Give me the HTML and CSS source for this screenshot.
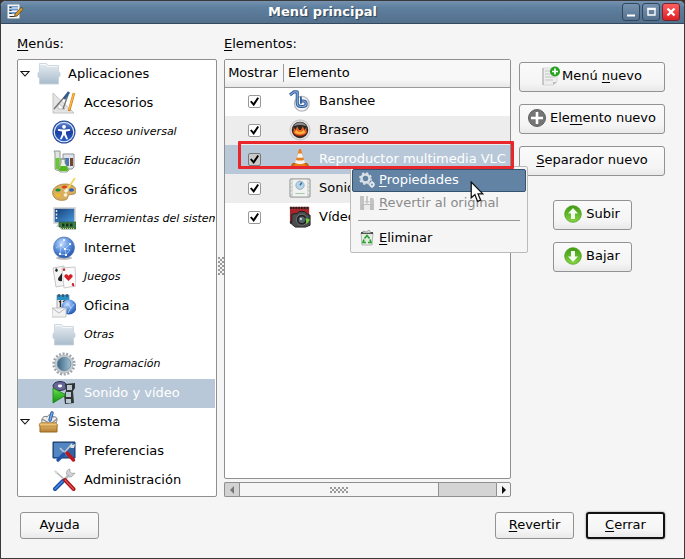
FILE: index.html
```html
<!DOCTYPE html>
<html lang="es">
<head>
<meta charset="utf-8">
<title>Menú principal</title>
<link rel="stylesheet" href="styles.css">
</head>
<body>
<svg class="defs" aria-hidden="true">
  <defs>
    <linearGradient id="folder" x1="0" y1="0" x2="0" y2="1"><stop offset="0" stop-color="#e6ecf1"/><stop offset="1" stop-color="#a9bccb"/></linearGradient>
    <radialGradient id="blue" cx=".4" cy=".3" r=".75"><stop offset="0" stop-color="#c3dcff"/><stop offset=".5" stop-color="#5d92df"/><stop offset="1" stop-color="#1d4da8"/></radialGradient>
    <linearGradient id="deep" x1="0" y1="0" x2="0" y2="1"><stop offset="0" stop-color="#5f86d6"/><stop offset=".5" stop-color="#1b3f9e"/><stop offset="1" stop-color="#2c62cc"/></linearGradient>
    <linearGradient id="screen" x1="0" y1="0" x2="1" y2="1"><stop offset="0" stop-color="#123c73"/><stop offset="1" stop-color="#4d9be0"/></linearGradient>
    <linearGradient id="wood" x1="0" y1="0" x2="0" y2="1"><stop offset="0" stop-color="#e6bd74"/><stop offset="1" stop-color="#b57e32"/></linearGradient>
    <linearGradient id="green" x1="0" y1="0" x2="0" y2="1"><stop offset="0" stop-color="#3f9a14"/><stop offset="1" stop-color="#86d63e"/></linearGradient>
    <linearGradient id="steel" x1="0" y1="0" x2="1" y2="0"><stop offset="0" stop-color="#3a6483"/><stop offset="1" stop-color="#9fc0d3"/></linearGradient>
    <linearGradient id="play" x1="0" y1="0" x2="0" y2="1"><stop offset="0" stop-color="#6be04e"/><stop offset="1" stop-color="#10930f"/></linearGradient>
    <symbol id="i-folder" viewBox="0 0 24 24"><path d="M2.500 1.500h7l1.500 2h10.500v6l1.500 1v3.500l-1.500 1V22h-19v-6L1 15v-4.500l1.500-1z" fill="url(#folder)" stroke="#c4d0da" stroke-width=".8"/><path d="M3.500 2.500h5.500l1.500 2h10" stroke="#fff" fill="none" opacity=".7"/></symbol>
    <symbol id="i-tools" viewBox="0 0 24 24"><path d="M3 3l12 11" stroke="#b4b6b7" stroke-width="1.600"/><path d="M2 2l4 2.500-2 2z" fill="#d9dada"/><path d="M18 1a4 4 0 0 0-3 6l2 2 3-.5 3-3.500-3 .5-2-2z" fill="#d0d3d5" stroke="#8b8d8f" stroke-width=".6"/><path d="M17 7l-6 6" stroke="#b8bcbf" stroke-width="2.600"/><path d="M11 13l-8 8" stroke="#174ba5" stroke-width="4" stroke-linecap="round"/><path d="M11 13l-8 8" stroke="#4b8be4" stroke-width="1.400" stroke-linecap="round"/><path d="M13 12l8.500 9" stroke="#a70f12" stroke-width="4" stroke-linecap="round"/><path d="M13 12l8.500 9" stroke="#e65355" stroke-width="1.200" stroke-linecap="round"/></symbol>
  </defs>
</svg>

<div class="window">
  <header class="titlebar">
    <svg class="app-icon" viewBox="0 0 16 16"><rect x="1" y="1" width="11" height="13" fill="#f4f6f8" stroke="#f6f4e8"/><path d="M2 2h9v1.500H2zM2 4.500h9v2H2zM2 8h9v2H2z" fill="#6f99d2"/><path d="M2.500 3.500h2m-2 3h2m-2 3h2m-2 3h5" stroke="#333"/><path d="M14.500 3L8 10l-.5 2.500L10 12l6-6.500z" fill="#d9982d" stroke="#5b4215" stroke-width=".8"/></svg>
    <h1 class="title">Menú principal</h1>
    <div class="window-buttons">
      <button class="wb" aria-label="Minimizar"><svg viewBox="0 0 16 16"><path d="M4 11.500h8" stroke="#fff" stroke-width="2"/></svg></button>
      <button class="wb" aria-label="Maximizar"><svg viewBox="0 0 16 16"><path d="M5 5h7v6H5z" fill="none" stroke="#fff" stroke-width="1.400"/><path d="M4.300 4.700h8.400" stroke="#fff" stroke-width="2"/></svg></button>
      <button class="wb close" aria-label="Cerrar ventana"><svg viewBox="0 0 16 16"><path d="M4.500 4.500l7 7m0-7l-7 7" stroke="#fff" stroke-width="2.400"/></svg></button>
    </div>
  </header>

  <main class="content">
    <section class="menus">
      <h2 class="label"><u>M</u>enús:</h2>
      <ul class="tree">
        <li class="row top"><svg class="expander" viewBox="0 0 10 8"><path d="M1 1.500h8L5 6z" fill="#fff" stroke="#111" stroke-width="1.100"/></svg><svg class="icon"><use href="#i-folder"/></svg><span>Aplicaciones</span></li>
        <li class="row"><svg class="icon" viewBox="0 0 24 24"><path d="M1 2v20h21z" fill="#e4e4e4" stroke="#c4c4c4"/><path d="M6 12v6h7z" fill="#fff" stroke="#bbb"/><path d="M15 3L2 18M16 4l-5 14" stroke="#777" stroke-width="1.400"/><path d="M17 1l-5 7" stroke="#315a8d" stroke-width="2.600"/><path d="M22 2l-5 18" stroke="#c67a18" stroke-width="2.600"/><path d="M22 2l-5 17" stroke="#fdb53b" stroke-width="1.500"/></svg><span>Accesorios</span></li>
        <li class="row hidden-menu"><svg class="icon" viewBox="0 0 24 24"><circle cx="12" cy="12" r="11.500" fill="#2a4f9f"/><circle cx="12" cy="12" r="10.300" fill="#e9f0fc"/><circle cx="12" cy="12" r="9.200" fill="url(#deep)"/><circle cx="12" cy="6.800" r="1.900" fill="#fff"/><path d="M6 9l5 .6h2L18 9v1.800l-4 .8v2.400l2 5-1.600.6L12 15l-2.400 4.600L8 19l2-5v-2.400l-4-.8z" fill="#fff"/></svg><span>Acceso universal</span></li>
        <li class="row hidden-menu"><svg class="icon" viewBox="0 0 24 24"><path d="M2 2h6v18a3 3 0 0 1-5 0V4z" fill="#dfe6df" stroke="#8e9a8e"/><path d="M3.500 9h4v11h-4z" fill="#6cc634"/><path d="M11 5h11v13l-2 2h-7l-2-3z" fill="#dfe3ea" stroke="#8d9098"/><path d="M12 9h5v8h-5z" fill="#4c77b5"/><path d="M18 9h3v8h-3z" fill="#7a432b"/><path d="M9 10h4v4l4 7-2 2H8l-2-2 3-7z" fill="#e9f2e5" stroke="#7d917a" stroke-width=".8"/><path d="M8.500 17h6l2 4-1.500 1H8l-1.500-1z" fill="#54b81c"/><path d="M8 10h6" stroke="#89938a"/></svg><span>Educación</span></li>
        <li class="row"><svg class="icon" viewBox="0 0 24 24"><path d="M1 17C-1 11 5 6 13 6c7 0 12 3 11 8-.5 3-5 2-7 3s0 4-4 5C8 23 3 22 1 17z" fill="#d9ae61" stroke="#a97c34" stroke-width=".8"/><ellipse cx="6" cy="12" rx="2.700" ry="1.600" fill="#17913b"/><ellipse cx="12.500" cy="9" rx="2.700" ry="1.600" fill="#d94418"/><ellipse cx="19.500" cy="12" rx="2.500" ry="1.700" fill="#2862b6"/><ellipse cx="6" cy="17" rx="2.700" ry="1.600" fill="#f0be1f"/><circle cx="13.500" cy="17" r="1.800" fill="#fff4d5"/><path d="M23 0l-9 13" stroke="#f3d35c" stroke-width="1.800"/><path d="M15.500 11L13 14" stroke="#f4f1e3" stroke-width="3"/></svg><span>Gráficos</span></li>
        <li class="row hidden-menu"><svg class="icon" viewBox="0 0 24 24"><rect x="2" y="1" width="21" height="15" fill="url(#screen)" stroke="#d0d3d3" stroke-width="1.600"/><path d="M4.500 3v9" stroke="#d7e8ff" stroke-width="1.500" stroke-dasharray="2 1.500"/><path d="M6 17h6l-1 3H4z" fill="#cfcfcf"/><path d="M7 15h17v7H9v-2H7z" fill="#3e7e46" stroke="#23552c" stroke-width=".6"/><path d="M10 16.500h2.500v3H10zm4 0h2.500v3H14zm4 0h2.500v3H18z" fill="#18301c"/><path d="M9 21.500h13" stroke="#d8c46a" stroke-dasharray="1 1"/></svg><span>Herramientas del sistema</span></li>
        <li class="row"><svg class="icon" viewBox="0 0 24 24"><ellipse cx="12" cy="22" rx="8" ry="1.700" fill="#bbb"/><circle cx="12" cy="11.500" r="10.500" fill="url(#blue)" stroke="#5173ad" stroke-width=".8"/><path d="M4 12l5-3 4 4 5-5M9 9l3-5m1 9l1 6m-5-10l-1 9 6 1 4-5-5-1" fill="none" stroke="#c9dfff" stroke-width=".6"/><path d="M8 8h2v2H8zM12 12h2v2h-2zM17 7h2v2h-2zM13 18h2v2h-2zM7 17h2v2H7zM11 3h2v2h-2z" fill="#eef6ff"/></svg><span>Internet</span></li>
        <li class="row hidden-menu"><svg class="icon" viewBox="0 0 24 24"><path d="M1 3l11-2 3 19-11 2z" fill="#f4f4f4" stroke="#c5c5c5"/><path d="M4 3l2 2-1 2-2-1zM10 8v8c-4 1-5-2-3-4z" fill="#252525"/><path d="M10 3l13-1 1 19-12 2z" fill="#fbfbfb" stroke="#cacaca"/><path d="M16.500 16l-4-4c-1-3 3-4 4-1 1-3 5-2 4 1z" fill="#d51f28"/><path d="M12 6l-1-2h2zM21 18l1 3-2-1z" fill="#d51f28" stroke="#d51f28"/></svg><span>Juegos</span></li>
        <li class="row"><svg class="icon" viewBox="0 0 24 24"><path d="M5 1h12v13H5z" fill="#eee" stroke="#aaa"/><path d="M5 1h12v5H5z" fill="#298fc5"/><path d="M7 0v3m4-3v3m4-3v3" stroke="#33434f" stroke-width="1.300"/><path d="M7 8l1.500-1v6M11 8c1-2 4-1 3 1l-3 4h4" stroke="#252525" stroke-width="1.400" fill="none"/><circle cx="17" cy="13" r="7.500" fill="url(#blue)"/><path d="M12 12l4-2 3 4 3-4m-3 4l-3 5" stroke="#d5e7ff" stroke-width=".7" fill="none"/><path d="M0 14h14v9H0z" fill="#f2f2f2" stroke="#c6c6c6"/><path d="M0 14l7 5 7-5" fill="none" stroke="#bbb"/></svg><span>Oficina</span></li>
        <li class="row hidden-menu"><svg class="icon"><use href="#i-folder"/></svg><span>Otras</span></li>
        <li class="row hidden-menu"><svg class="icon" viewBox="0 0 24 24"><circle cx="12" cy="12" r="10.300" fill="none" stroke="#9ba5ab" stroke-width="2.600" stroke-dasharray="2 1.600"/><circle cx="12" cy="12" r="9" fill="#c7ced2" stroke="#a2adb3" stroke-width=".7"/><circle cx="12" cy="12" r="6.800" fill="url(#steel)" stroke="#6f8796" stroke-width=".8"/></svg><span>Programación</span></li>
        <li class="row selected"><svg class="icon" viewBox="0 0 24 24"><ellipse cx="8" cy="5" rx="7" ry="4.500" fill="#656597" stroke="#303055"/><ellipse cx="8" cy="5" rx="2.200" ry="1.400" fill="#fff"/><path d="M13 3l10-1v5l-2 3 1 12-9 1-1-9 2-4z" fill="#303536"/><path d="M15 4h5v5h-5zm-1 7h5v5h-5zm0 7h5v4h-5z" fill="#b8c7cf"/><path d="M1 7l13 7L1 22z" fill="url(#play)" stroke="#128313" stroke-width=".8"/></svg><span>Sonido y vídeo</span></li>
        <li class="row top"><svg class="expander" viewBox="0 0 10 8"><path d="M1 1.500h8L5 6z" fill="#fff" stroke="#111" stroke-width="1.100"/></svg><svg class="icon" viewBox="0 0 24 24"><path d="M5 13c-1-5 2-8 5-6 1-3 6-3 6 0 4-1 5 2 3 6z" fill="#eceeec" stroke="#777"/><path d="M13 10l2-7" stroke="#275a9f" stroke-width="3.400" stroke-linecap="round"/><path d="M13 10l2-7" stroke="#7bacec" stroke-width="1.500" stroke-linecap="round"/><path d="M5 9l7 4m3 0l5-4" stroke="#888" stroke-width="1.200"/><path d="M3 14h17v8H3z" fill="url(#wood)" stroke="#9b691f"/><path d="M3 13h16l2 3H2z" fill="#ebc37b" stroke="#b78031" stroke-width=".8"/></svg><span>Sistema</span></li>
        <li class="row"><svg class="icon" viewBox="0 0 24 24"><path d="M1 3h22v16H1z" fill="#3264a5" stroke="#143865"/><path d="M2 4h20L7 18H2z" fill="#5286c3"/><path d="M8 9l7 7M19 6l-7 8" stroke="#c1cad1" stroke-width="1.600"/><path d="M12 15l-6 6" stroke="#1f53ab" stroke-width="3.400" stroke-linecap="round"/><path d="M15 14l6.500 7" stroke="#bd191d" stroke-width="3.400" stroke-linecap="round"/><path d="M18 8l1-4 1.500 2L23 5l-1 4h-3z" fill="#dfe4e7"/></svg><span>Preferencias</span></li>
        <li class="row"><svg class="icon"><use href="#i-tools"/></svg><span>Administración</span></li>
      </ul>
    </section>

    <div class="splitter"><span class="grip grip-v"></span></div>

    <section class="elements">
      <h2 class="label"><u>E</u>lementos:</h2>
      <div class="panel">
        <div class="table-box">
          <table>
            <thead><tr><th class="show-col"><span>Mostrar</span></th><th>Elemento</th></tr></thead>
            <tbody>
              <tr><td class="show-col"><input type="checkbox" id="c1" checked></td><td><label for="c1"><svg class="icon" viewBox="0 0 24 24"><circle cx="14" cy="15" r="8" fill="#f4f5f6" stroke="#b9bdc2" stroke-width="1.500"/><path d="M1 5.500L5.500 2H9v12.500c0 2 1.500 3.500 4 3.500h2c5 0 5-6 0-6h-2" fill="none" stroke="#315c94" stroke-width="3.400" stroke-linejoin="round"/><path d="M1 5.500L5.500 2H9v12.500c0 2 1.500 3.500 4 3.500h2c5 0 5-6 0-6h-2" fill="none" stroke="#82ace0" stroke-width="1.300"/><path d="M13 7v8" stroke="#315c94" stroke-width="2"/></svg>Banshee</label></td></tr>
              <tr><td class="show-col"><input type="checkbox" id="c2" checked></td><td><label for="c2"><svg class="icon" viewBox="0 0 24 24"><circle cx="12" cy="12" r="11" fill="#e2e2e2" stroke="#c2c2c2"/><circle cx="12" cy="12" r="9" fill="#2c2726"/><path d="M3.500 13h17a9 9 0 0 1-17 0z" fill="#8a2015"/><path d="M5 15V9l2 3 2-4 2 4h2l2-4 2 4 2-3v6c-3 4-11 4-14 0z" fill="#e8621d"/><path d="M6 15l2-3 2 2h4l2-2 2 3c-3 2-9 2-12 0z" fill="#ffb240"/><path d="M5 8c3-6 11-6 14 0-5-2-9-2-14 0z" fill="#8a8988"/></svg>Brasero</label></td></tr>
              <tr class="selected"><td class="show-col"><input type="checkbox" id="c3" checked></td><td><label for="c3"><svg class="icon" viewBox="0 0 24 24"><path d="M4 17h16l2 4-3 1H5l-3-1z" fill="#d76f0d" stroke="#ad5607"/><path d="M11 1h2l5 18c-3 2-9 2-12 0z" fill="#e78120"/><path d="M10 6h4l1.500 4c-2 1-5 1-7 0zM7.500 13c3 1 6 1 9 0l1 3c-3 2-8 2-11 0z" fill="#f3f3f0"/></svg>Reproductor multimedia VLC</label></td></tr>
              <tr><td class="show-col"><input type="checkbox" id="c4" checked></td><td><label for="c4"><svg class="icon" viewBox="0 0 24 24"><rect x="1" y="2" width="22" height="20" rx="1" fill="#c9ceca" stroke="#999"/><rect x="4" y="3" width="16" height="18" fill="#f1f3f0"/><circle cx="12" cy="9" r="4.500" fill="#b9d4e9" stroke="#94a9b9"/><path d="M12 9l2-3" stroke="#246dac" stroke-width="1.500"/><path d="M7 18h10" stroke="#9bc5a1"/><path d="M2.500 4v16m19-16v16" stroke="#f5f5f5" stroke-dasharray="2 2"/></svg>Sonido</label></td></tr>
              <tr><td class="show-col"><input type="checkbox" id="c5" checked></td><td><label for="c5"><svg class="icon" viewBox="0 0 24 24"><rect x="1" y="1" width="21" height="17" fill="#a92529"/><path d="M1 2h21M1 18h20" stroke="#222" stroke-width="2.500" stroke-dasharray="2 1"/><path d="M3 9l6-1 2-2h6l3 3 3 1v11l-5 2H7l-4-3z" fill="#4a4c4d" stroke="#1d1e1f"/><circle cx="14" cy="15" r="6" fill="#202325" stroke="#777"/><circle cx="14" cy="15" r="3.500" fill="#57646d"/><circle cx="13" cy="14" r="1.300" fill="#c9d3da"/><path d="M18 13l5 2-4 5z" fill="#70cf38"/></svg>Vídeos</label></td></tr>
            </tbody>
          </table>
        </div>
        <div class="scrollbar">
          <button class="arrow off" aria-label="Izquierda"><svg viewBox="0 0 6 8"><path d="M5 0v8L1 4z" fill="#777"/></svg></button>
          <div class="track"><div class="thumb"><span class="grip grip-h"></span></div></div>
          <button class="arrow" aria-label="Derecha"><svg viewBox="0 0 6 8"><path d="M1 0v8l4-4z" fill="#111"/></svg></button>
        </div>
        <div class="context-menu" role="menu">
          <button class="item active" role="menuitem"><svg viewBox="0 0 16 16"><circle cx="6.500" cy="6.500" r="4" fill="none" stroke="#d8e0e6" stroke-width="2.500"/><circle cx="6.500" cy="6.500" r="5.600" fill="none" stroke="#d8e0e6" stroke-width="1.600" stroke-dasharray="2.200 2.200"/><circle cx="13" cy="12.500" r="1.800" fill="none" stroke="#e6ecf0" stroke-width="1.800"/><path d="M13 9v1m0 5v1m-3.500-3.500h1m5 0h1" stroke="#e6ecf0" stroke-width="1.200"/></svg><span><u>P</u>ropiedades</span></button>
          <button class="item" role="menuitem" disabled><svg viewBox="0 0 16 16"><path d="M1 1h4v14H1zM11 3h3l1 2v10h-4z" fill="#c3c3c3"/><path d="M2 9h12v6H2z" fill="#bdbdbd"/><path d="M5 10h6v5H5z" fill="#ececec"/><path d="M7 1h2v5h2l-3 3-3-3h2z" fill="#c9c9c9"/></svg><span><u>R</u>evertir al original</span></button>
          <hr>
          <button class="item" role="menuitem"><svg viewBox="0 0 16 16"><path d="M2 3h12l-1 12H3z" fill="#e5eae5" stroke="#a2aaa2" stroke-width=".8"/><path d="M2 2h12v2H2z" fill="#4d514d"/><path d="M4 1l3 1 3-2 2 3H4z" fill="#d8ddd8" stroke="#666" stroke-width=".5"/><path d="M5.500 8.500L8 5.500l2.500 3M11 9.500l1 3H9M7 12.500H4l1-3" fill="none" stroke="#27a52d" stroke-width="1.700"/></svg><span><u>E</u>liminar</span></button>
        </div>
        <div class="highlight"></div>
        <svg class="cursor" viewBox="0 0 13 21"><path d="M1 1v15l3.500-3 2.500 6.500 3-1.200-2.500-6H12z" fill="#fff" stroke="#111" stroke-width="1.200"/></svg>
      </div>
    </section>

    <aside class="actions">
      <button class="btn wide"><svg class="new-page" viewBox="0 0 18 20"><path d="M1 2h14v14l-4 3H1z" fill="#eee" stroke="#d2d2d2" stroke-width=".8"/><path d="M3 5h6M3 8h8M3 11h10M3 14h8" stroke="#c5c5c5"/><path d="M1 2v17" stroke="#aaa"/><path d="M11 19v-3h4z" fill="#bbb"/><circle cx="13" cy="5.500" r="5" fill="#25a31e"/><path d="M13 2.500v6m-3-3h6" stroke="#fff" stroke-width="1.700"/></svg><span>Menú <u>n</u>uevo</span></button>
      <button class="btn wide"><svg viewBox="0 0 18 18"><circle cx="9" cy="9" r="8.500" fill="#757575" stroke="#606060"/><path d="M9 3v12M3 9h12" stroke="#fff" stroke-width="2.600"/></svg><span>Ele<u>m</u>ento nuevo</span></button>
      <button class="btn wide"><span><u>S</u>eparador nuevo</span></button>
      <div class="move">
        <button class="btn"><svg viewBox="0 0 18 18"><circle cx="9" cy="9" r="8.300" fill="url(#green)" stroke="#4c9d20" stroke-width=".8"/><path d="M9 3l5 5.500h-3V14H7V8.500H4z" fill="#f4fbf0"/></svg><span>Subir</span></button>
        <button class="btn"><svg viewBox="0 0 18 18"><circle cx="9" cy="9" r="8.300" fill="url(#green)" stroke="#4c9d20" stroke-width=".8"/><path d="M9 15l5-5.500h-3V4H7v5.500H4z" fill="#f4fbf0"/></svg><span>Bajar</span></button>
      </div>
    </aside>
  </main>

  <footer class="footer">
    <button class="btn"><span>Ay<u>u</u>da</span></button>
    <div class="spacer"></div>
    <button class="btn"><span><u>R</u>evertir</span></button>
    <button class="btn default"><span><u>C</u>errar</span></button>
  </footer>
</div>
</body>
</html>
```
FILE: styles.css
```css
* { box-sizing: border-box; }
body {
  margin: 0;
  background: #333;
  color: #000;
  font: 13px/20px "DejaVu Sans", sans-serif;
}
button { font: inherit; color: inherit; padding: 0; margin: 0; }
u { text-underline-offset: 2px; text-decoration-thickness: 1px; }
h1, h2 { margin: 0; }
.defs { position: absolute; width: 0; height: 0; }

.window {
  min-height: 100vh;
  display: flex;
  flex-direction: column;
  background: #f5f5f5;
  border: 1px solid #3a3a3a;
  border-radius: 6px 6px 0 0;
  overflow: hidden;
}
.titlebar {
  display: flex;
  align-items: center;
  height: 23px;
  padding: 0 4px 0 6px;
  background: linear-gradient(#7592af, #5f7f9f 30%, #53708c);
  border-bottom: 1px solid #34495d;
}
.app-icon { width: 16px; height: 16px; }
.title {
  flex: 1;
  text-align: center;
  color: #fff;
  font-size: 13px;
  font-weight: bold;
  text-shadow: 1px 1px 1px #2d4257;
}
.window-buttons { display: flex; gap: 2px; }
.wb {
  width: 18px;
  height: 18px;
  border: 1px solid #30465c;
  border-radius: 3px;
  background: linear-gradient(#7793b0, #54718e);
}
.wb svg { display: block; width: 16px; height: 16px; }
.wb.close { background: linear-gradient(#ff5f5f, #df1f24); border-color: #6e2930; }

.content {
  display: grid;
  grid-template-columns: 200px 7px minmax(0, 1fr) 146px;
  padding: 10px 19px 0 16px;
}
.label { height: 25px; font-size: 13px; font-weight: normal; }
.menus, .elements { display: flex; flex-direction: column; }
.tree {
  list-style: none;
  margin: 0;
  padding: 0 1px 1px 0;
  border: 1px solid #8f8f8f;
  border-radius: 2px;
  background: #fff;
}
.row {
  display: flex;
  align-items: center;
  gap: 8px;
  height: 29px;
  padding: 0 0 2px 34px;
  white-space: nowrap;
  overflow: hidden;
}
.row.top { padding-left: 2px; gap: 7px; }
.hidden-menu { font: italic 11px/20px "DejaVu Sans", sans-serif; }
.expander { width: 10px; height: 8px; flex: none; }
.icon { width: 24px; height: 24px; flex: none; }
.selected { background: #b8c8d8; color: #fff; }

.splitter { display: flex; align-items: center; justify-content: center; }
.grip {
  background-image:
    radial-gradient(circle at 1px 1px, #999 1px, transparent 1px),
    radial-gradient(circle at 3px 3px, #999 1px, transparent 1px);
  background-size: 4px 4px;
}
.grip-v { width: 6px; height: 18px; }
.grip-h { width: 18px; height: 6px; }

.elements { margin-right: 8px; }
.panel { position: relative; flex: 1; display: flex; flex-direction: column; gap: 3px; }
.table-box {
  flex: 1;
  border: 1px solid #8f8f8f;
  border-radius: 2px;
  background: #fff;
}
table { width: 100%; border-collapse: collapse; table-layout: fixed; }
th {
  height: 27px;
  padding: 0 0 0 4px;
  font-weight: normal;
  text-align: left;
  background: linear-gradient(#f8f8f8 70%, #e8e8e8);
  border-bottom: 1px solid #999;
}
.show-col { width: 59px; text-align: center; }
th.show-col { padding: 0; }
th.show-col span { display: block; border-right: 1px solid #999; line-height: 18px; padding-right: 2px; }
td { height: 29px; padding: 0 0 2px 5px; white-space: nowrap; }
td.show-col { padding: 0; }
tbody tr:nth-child(even) { background: #ededed; }
td label { display: flex; align-items: center; gap: 8px; }
td .icon { width: 22px; height: 22px; }
input[type="checkbox"] {
  appearance: none;
  display: block;
  width: 13px;
  height: 13px;
  margin: 0 auto;
  border: 1px solid #999;
  border-radius: 2px;
  background: #fff;
}
input[type="checkbox"]::before {
  content: "";
  display: block;
  width: 9px;
  height: 9px;
  margin: 1px;
  background: #000;
  clip-path: polygon(0 50%, 18% 38%, 38% 64%, 82% 0, 100% 10%, 42% 100%);
}
.selected input[type="checkbox"] { background: #c9c9c9; border-color: #777; }

.scrollbar { display: flex; height: 15px; }
.arrow {
  display: flex;
  align-items: center;
  justify-content: center;
  width: 15px;
  border: 1px solid #8f8f8f;
  border-radius: 0 2px 2px 0;
  background: #f5f5f5;
}
.arrow.off { background: #d2d2d2; border-radius: 2px 0 0 2px; border-right: 0; }
.arrow svg { width: 6px; height: 8px; }
.track { flex: 1; background: #d4d4d4; border: solid #8f8f8f; border-width: 1px 0; }
.thumb {
  display: flex;
  align-items: center;
  justify-content: center;
  width: 78%;
  height: 100%;
  background: #f5f5f5;
  border: solid #8f8f8f;
  border-width: 0 1px;
}

.context-menu {
  position: absolute;
  left: 126px;
  top: 107px;
  width: 178px;
  padding: 2px 1px;
  background: #f5f5f5;
  border: 1px solid #bbb;
  border-radius: 2px;
}
.item {
  display: flex;
  align-items: center;
  gap: 4px;
  width: 100%;
  height: 23px;
  padding: 0 6px 2px;
  border: 1px solid transparent;
  border-radius: 2px;
  background: none;
  white-space: nowrap;
}
.item svg { width: 16px; height: 16px; }
.item.active { background: #6283a4; border-color: #35536f; color: #fff; }
.item:disabled { color: #8a8a8a; }
.context-menu hr { margin: 5px 6px 6px; border: 0; border-top: 1px solid #999; }
.highlight {
  position: absolute;
  left: 14px;
  top: 82px;
  width: 276px;
  height: 28px;
  border: 3px solid #e9262b;
  border-radius: 1px;
  pointer-events: none;
}
.cursor { position: absolute; left: 246px; top: 122px; width: 14px; height: 22px; }

.actions { display: flex; flex-direction: column; gap: 12px; padding-top: 28px; }
.btn {
  display: flex;
  align-items: center;
  justify-content: center;
  gap: 2px;
  width: 79px;
  height: 30px;
  padding-bottom: 2px;
  border: 1px solid #929292;
  border-radius: 3px;
  background: linear-gradient(#fafafa, #f5f5f5 70%, #e9e9e9);
  white-space: nowrap;
}
.btn svg { width: 18px; height: 18px; margin-right: 2px; }
.btn.wide { width: 100%; }
.btn .new-page { height: 20px; margin-right: 0; }
.move { display: flex; flex-direction: column; align-items: center; gap: 12px; padding-top: 12px; }

.footer { display: flex; gap: 12px; padding: 15px 19px 19px; }
.footer .btn { height: 27px; }
.spacer { flex: 1; }
.default { border: 2px solid #111; box-shadow: 0 0 2px #777; }
```
